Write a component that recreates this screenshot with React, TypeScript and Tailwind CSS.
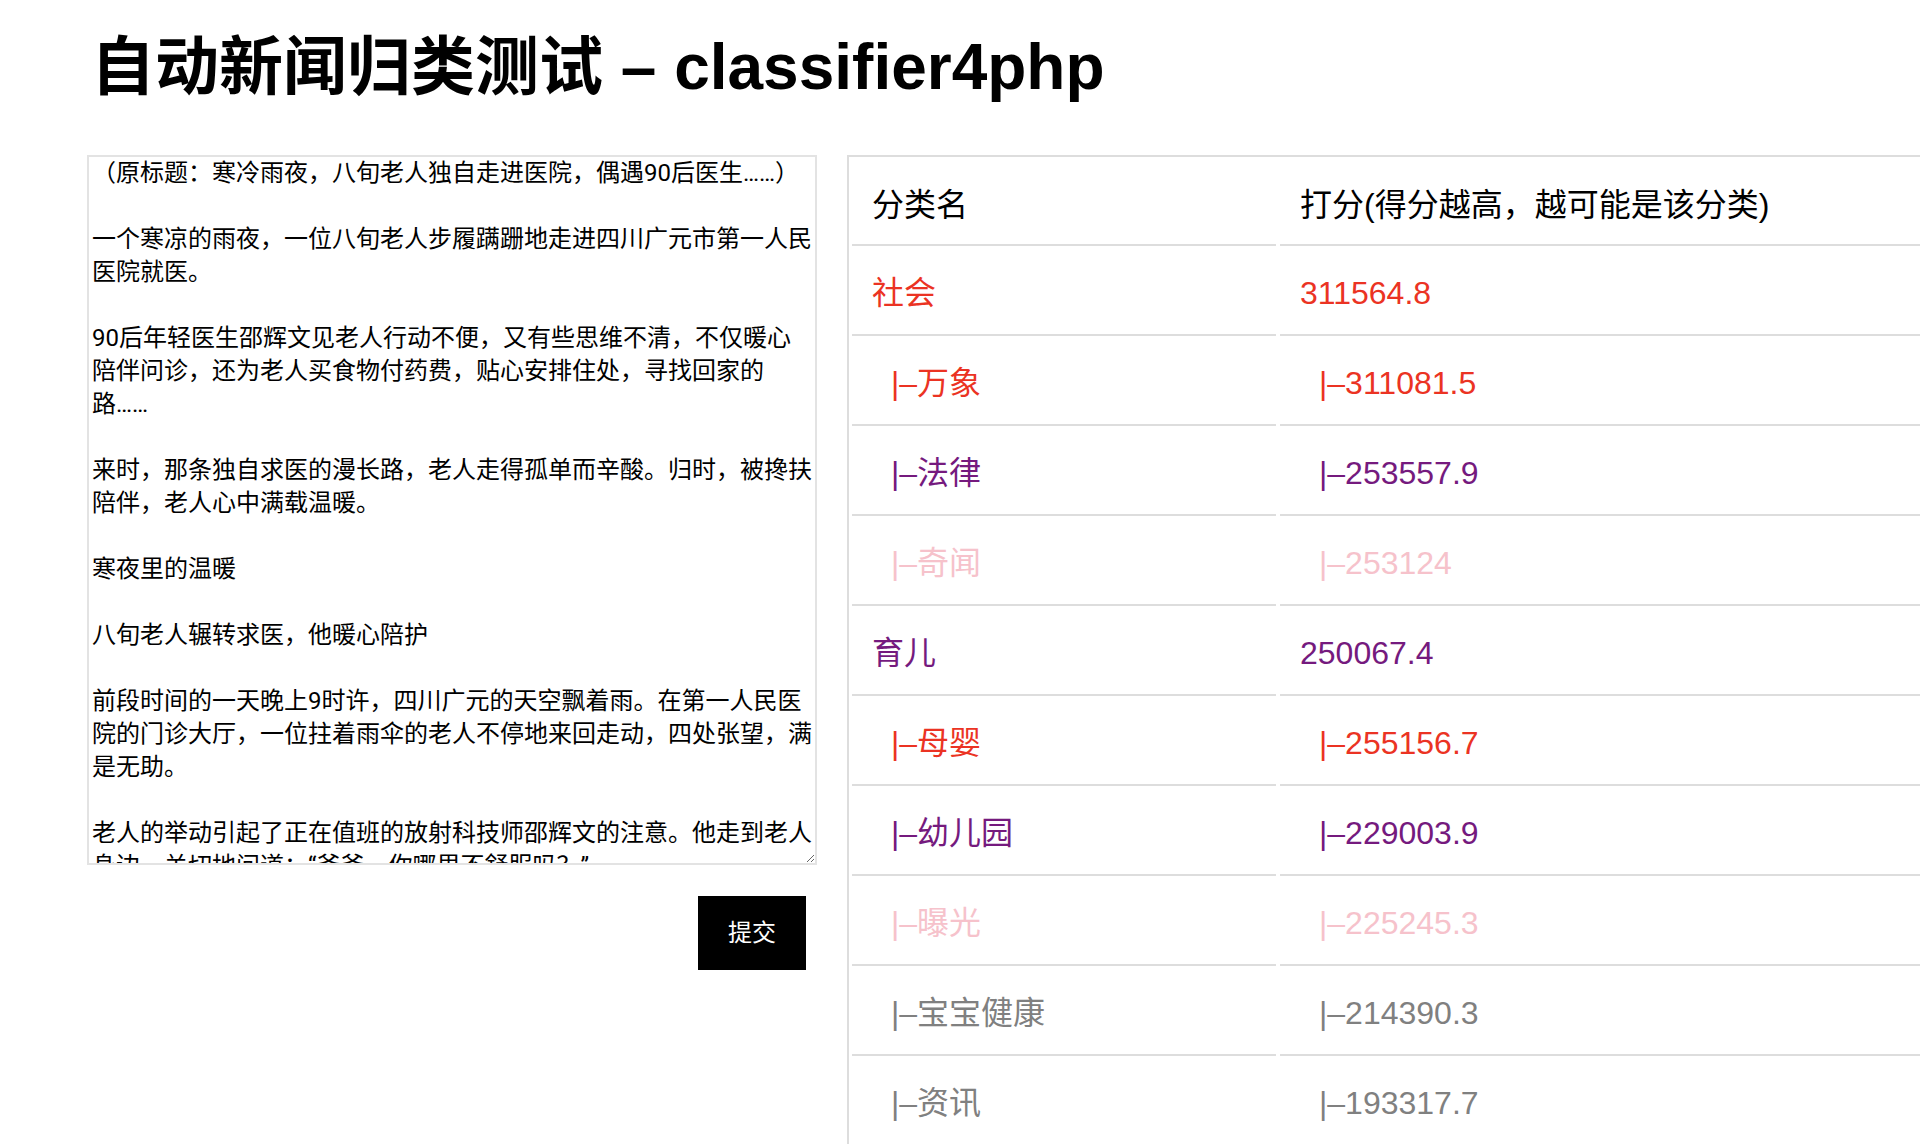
import React from "react";

type Row = {
  name: string;
  score: string;
  sub?: boolean;
  color: string;
};

const rows: Row[] = [
  { name: "社会", score: "311564.8", color: "text-[#eb3323]" },
  { name: "万象", score: "311081.5", sub: true, color: "text-[#eb3323]" },
  { name: "法律", score: "253557.9", sub: true, color: "text-[#751a7e]" },
  { name: "奇闻", score: "253124", sub: true, color: "text-[#f6c2cb]" },
  { name: "育儿", score: "250067.4", color: "text-[#751a7e]" },
  { name: "母婴", score: "255156.7", sub: true, color: "text-[#eb3323]" },
  { name: "幼儿园", score: "229003.9", sub: true, color: "text-[#751a7e]" },
  { name: "曝光", score: "225245.3", sub: true, color: "text-[#f6c2cb]" },
  { name: "宝宝健康", score: "214390.3", sub: true, color: "text-[#808080]" },
  { name: "资讯", score: "193317.7", sub: true, color: "text-[#808080]" },
];

const news = [
  "（原标题：寒冷雨夜，八旬老人独自走进医院，偶遇90后医生……）",
  "一个寒凉的雨夜，一位八旬老人步履蹒跚地走进四川广元市第一人民医院就医。",
  "90后年轻医生邵辉文见老人行动不便，又有些思维不清，不仅暖心陪伴问诊，还为老人买食物付药费，贴心安排住处，寻找回家的路……",
  "来时，那条独自求医的漫长路，老人走得孤单而辛酸。归时，被搀扶陪伴，老人心中满载温暖。",
  "寒夜里的温暖",
  "八旬老人辗转求医，他暖心陪护",
  "前段时间的一天晚上9时许，四川广元的天空飘着雨。在第一人民医院的门诊大厅，一位拄着雨伞的老人不停地来回走动，四处张望，满是无助。",
  "老人的举动引起了正在值班的放射科技师邵辉文的注意。他走到老人身边，关切地问道：“爷爷，你哪里不舒服吗？”",
].join("\n\n");

const Cell = ({
  children,
  wide,
  header,
}: {
  children: React.ReactNode;
  wide?: boolean;
  header?: boolean;
}) => (
  <div
    className={`${wide ? "flex-1" : "w-[424px] shrink-0"} ${
      header ? "h-[87px] pt-[6px]" : "h-[88px] pt-[4px]"
    } border-b-2 border-[#dddddd] flex items-center px-[20px]`}
  >
    {children}
  </div>
);

const App = () => {
  return (
    <div className="h-[1144px] overflow-hidden bg-white text-black [font-family:'Liberation_Sans','Noto_Sans_CJK_SC',sans-serif]">
      <h1 className="pl-[91px] pt-[35px] text-[64px] leading-[64px] font-bold">
        自动新闻归类测试 – classifier4php
      </h1>

      <div className="flex mt-[56px] pl-[87px] gap-[30px]">
        {/* left: text input */}
        <div className="w-[730px] shrink-0 flex flex-col">
          <textarea
            className="h-[710px] w-full border-2 border-[#e3e3e3] pl-[3px] pr-[2px] py-0 text-[24px] leading-[33px] text-black outline-none [scrollbar-width:none] [font-family:'Roboto','Noto_Sans_CJK_SC',sans-serif]"
            defaultValue={news}
          />
          <div className="flex justify-end pr-[11px] mt-[31px]">
            <button className="w-[108px] h-[74px] bg-black text-white text-[24px]">
              提交
            </button>
          </div>
        </div>

        {/* right: result table */}
        <div className="flex-1 border-l-2 border-t-2 border-[#dddddd] pl-[3px] pt-[2px] flex flex-col gap-[2px] text-[32px]">
          <div className="flex gap-[4px]">
            <Cell header>分类名</Cell>
            <Cell header wide>
              打分(得分越高，越可能是该分类)
            </Cell>
          </div>
          {rows.map((row) => (
            <div key={row.name} className={`flex gap-[4px] ${row.color}`}>
              <Cell>
                {row.sub ? <span className="pl-[19px]">|–{row.name}</span> : row.name}
              </Cell>
              <Cell wide>
                {row.sub ? <span className="pl-[19px]">|–{row.score}</span> : row.score}
              </Cell>
            </div>
          ))}
        </div>
      </div>
    </div>
  );
};

export default App;
